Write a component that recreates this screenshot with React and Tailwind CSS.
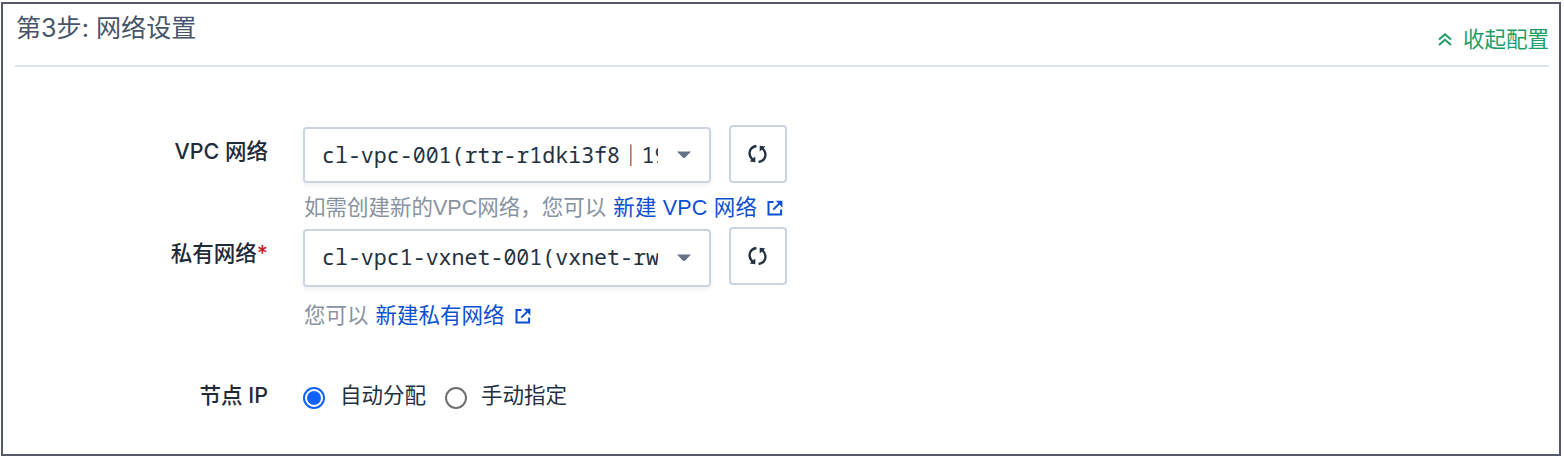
import React from "react";

function ExternalIcon() {
  return (
    <svg width="16" height="16" viewBox="0 0 16 16" fill="none" stroke="#0d4fd0" strokeWidth="2" className="shrink-0">
      <path d="M6.5 2H1.5v12.6h12.6V9.5" />
      <path d="M6.3 9.6L13 2.9" />
      <path d="M8.8 0.8H15.4V7.4Z" fill="#0d4fd0" stroke="none" />
    </svg>
  );
}

function RefreshIcon() {
  return (
    <svg width="20" height="20" viewBox="0 0 20 20" fill="none" stroke="#243142" strokeWidth="2.3">
      <path d="M8.4 2C.4 3.4 -.2 11.4 4.8 15.8" />
      <path d="M10.6 18C18.6 16.6 19.2 8.6 14.2 4.2" />
      <path d="M1.6 17.6L7.3 18.2V12.4Z" fill="#243142" stroke="none" />
      <path d="M17.4 2.4L11.7 1.8V7.6Z" fill="#243142" stroke="none" />
    </svg>
  );
}

function Label({ children }) {
  return <div className="w-[268px] shrink-0 text-right font-['Inter','Noto_Sans_CJK_SC',sans-serif] text-[21.5px] leading-8 font-medium whitespace-pre text-[#1f2b3a]">{children}</div>;
}

function Select({ value, tall }) {
  return (
    <div
      className={`${tall ? "h-[58px]" : "h-[56px]"} flex w-[408px] items-center rounded-[4px] border-2 border-[#cbd5e0] bg-white pl-[17px] shadow-[0_2px_5px_rgba(36,46,66,0.08)]`}
    >
      <div className={`${tall ? "-mt-[2px]" : ""} w-[336px] overflow-hidden font-['Noto_Sans_Mono','Noto_Sans_Mono_CJK_SC','DejaVu_Sans_Mono',monospace] text-[21.6px] leading-8 whitespace-nowrap text-[#243142]`}>
        {value}
      </div>
      <svg width="14" height="8" viewBox="0 0 14 8" className="ml-[19px]">
        <path d="M0 0.5H14L8.5 6.2Q7 7.6 5.5 6.2Z" fill="#637385" />
      </svg>
    </div>
  );
}

function RefreshButton() {
  return (
    <button className="ml-[18px] flex h-[58px] w-[58px] items-center justify-center rounded-[4px] border-2 border-[#cbd5e0] bg-white">
      <RefreshIcon />
    </button>
  );
}

export default function App() {
  return (
    <div className="h-[460px] w-[1564px] bg-white pt-[2px] pl-px font-['Liberation_Sans','Noto_Sans_CJK_SC',sans-serif]">
      <section className="h-[454px] w-[1560px] border-2 border-[#555b69]">
        <header className="mr-[10px] ml-3 flex h-[63px] justify-between border-b-2 border-[#dbe3eb]">
          <h2 className="mt-[6px] ml-px font-['Inter','Noto_Sans_CJK_SC',sans-serif] text-[25.1px] leading-9 text-[#485569]">第3步: 网络设置</h2>
          <div className="mt-[20px] flex h-8 items-center text-[21.5px] leading-8 text-[#1d9e66]">
            <svg width="14" height="14" viewBox="0 0 14 14" fill="none" stroke="#1d9e66" strokeWidth="2" className="mr-[11px]">
              <path d="M1 6.5L7 1.3L13 6.5M1 11.9L7 6.7L13 11.9" />
            </svg>
            收起配置
          </div>
        </header>

        <div className="-ml-[3px]">
          <div className="mt-[58px] flex h-[58px]">
            <div className="pt-[10px]"><Label>VPC 网络</Label></div>
            <div className="ml-[35px] pt-[2px]">
              <Select value={<>cl-vpc-001(rtr-r1dki3f8<span className="font-medium">｜</span>192.168.0.0/16</>} />
            </div>
            <RefreshButton />
          </div>
          <div className="mt-[9px] ml-[304px] flex h-8 items-center text-[21.5px] leading-8 whitespace-pre text-[#8893a1]">
            如需创建新的VPC网络，您可以 <span className="ml-px tracking-[0.2px] text-[#0d4fd0]">新建 VPC 网络</span>
            <span className="ml-[10px]"><ExternalIcon /></span>
          </div>

          <div className="mt-[3px] flex h-[60px]">
            <div className="pt-[10px]"><Label>私有网络<span className="text-[#c02026]">*</span></Label></div>
            <div className="ml-[35px] pt-[2px]"><Select tall value="cl-vpc1-vxnet-001(vxnet-rwk3q7d)" /></div>
            <RefreshButton />
          </div>
          <div className="mt-[13px] ml-[304px] flex h-8 items-center text-[21.5px] leading-8 whitespace-pre text-[#8893a1]">
            您可以 <span className="ml-px text-[#0d4fd0]">新建私有网络</span>
            <span className="ml-[10px]"><ExternalIcon /></span>
          </div>

          <div className="mt-12 flex h-8 items-center text-[21.5px] leading-8 text-[#243142]">
            <div className="pb-[2px]"><Label>节点 IP</Label></div>
            <span className="mt-[3px] ml-[35px] flex h-[22px] w-[22px] items-center justify-center rounded-full border-2 border-[#0f62fe]">
              <span className="h-[14px] w-[14px] rounded-full bg-[#0f62fe]" />
            </span>
            <span className="ml-[15px]">自动分配</span>
            <span className="mt-[3px] ml-[19px] h-[22px] w-[22px] rounded-full border-2 border-[#707070]" />
            <span className="ml-[14px]">手动指定</span>
          </div>
        </div>
      </section>
    </div>
  );
}
